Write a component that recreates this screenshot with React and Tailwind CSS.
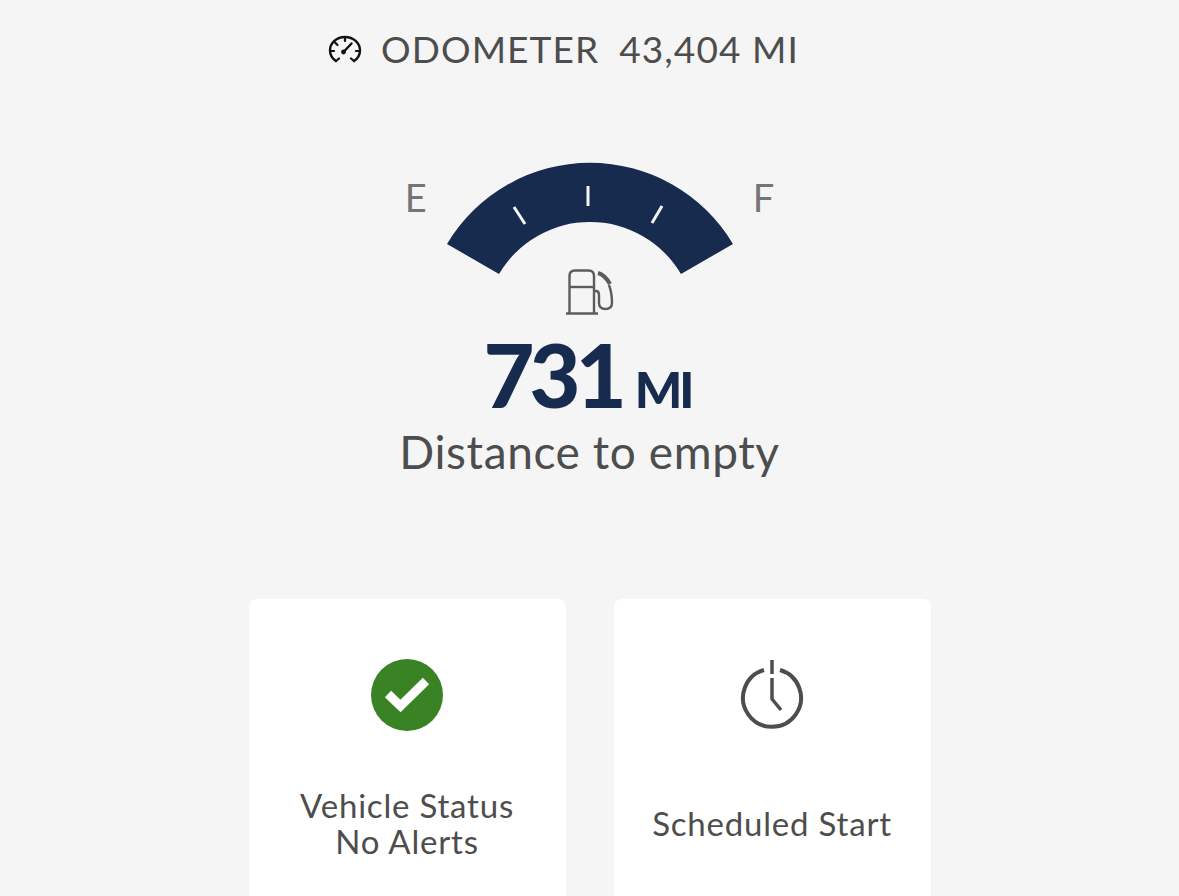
import React from "react";

const font = { fontFamily: '"Lato", "Open Sans", sans-serif' };

function OdometerIcon() {
  return (
    <svg width="34" height="30" viewBox="0 0 34 30" fill="none" stroke="#111" strokeWidth="2.4" strokeLinecap="round">
      <path d="M8 27 C3.5 24 2 20 2 16.5 C2 9 8.5 3 17 3 C25.5 3 32 9 32 16.5 C32 20 30.5 24 26 27" />
      <path d="M2.5 17 H6 M28 17 H31.5 M7 8.5 L9.5 11 M17 3.5 V7 M8 27 L11 24.5 M26 27 L23 24.5" strokeWidth="2.2" />
      <path d="M16 17.5 L23.5 9.5" strokeWidth="2.4" />
      <circle cx="15.5" cy="18" r="2.4" fill="#111" stroke="none" />
    </svg>
  );
}

function Gauge() {
  return (
    <svg width="286" height="154" viewBox="0 0 286 154" fill="none" className="overflow-visible">
      <path d="M0 81 A166.5 166.5 0 0 1 286 81 L234 111 A105.6 105.6 0 0 0 52 111 Z" fill="#172b4f" />
      <path d="M141 23 V43 M67 44 L78 61 M215 43 L205 60" stroke="#f5f5f5" strokeWidth="3" />
      {/* fuel pump */}
      <g stroke="#5c5c5c" strokeWidth="2.4" fill="none">
        <path d="M122.5 150 V113 Q122.5 107.5 128 107.5 H141.5 Q147 107.5 147 113 V150" />
        <path d="M122.5 124 H147" />
        <path d="M119 150.5 H151" strokeWidth="2.5" />
        <path d="M147 128 H149 Q152 128 152 132 V140 Q152 146 158.5 146 Q165 146 165 140 Q165 130 162 122" />
        <path d="M151 110 Q158 112 163 121" strokeWidth="4" />
      </g>
    </svg>
  );
}

function CheckBadge() {
  return (
    <svg width="72" height="72" viewBox="0 0 72 72">
      <circle cx="36" cy="36" r="36" fill="#3a8324" />
      <path d="M17 35 L29.5 47 L55 22" fill="none" stroke="#fff" strokeWidth="9" />
    </svg>
  );
}

function PowerClock() {
  return (
    <svg width="72" height="72" viewBox="0 0 72 72" fill="none" stroke="#4d4d4d">
      <path d="M28 11 A29 29 0 1 0 44 11" strokeWidth="4" />
      <path d="M36 1 V15 M36 19 V40 L45 51" strokeWidth="3.5" />
    </svg>
  );
}

function Card({ icon, children }) {
  return (
    <div className="w-[317px] h-[330px] shrink-0 rounded-lg bg-white pt-[60px] flex flex-col items-center">
      <div className="h-[72px] flex justify-center">{icon}</div>
      <div className="mt-[56px] h-[72px] flex items-center text-center text-[33px] leading-[36px] tracking-[0.8px] text-[#4d4d4d]">
        <div>{children}</div>
      </div>
    </div>
  );
}

export default function App() {
  return (
    <div className="h-[896px] overflow-hidden bg-[#f5f5f5]" style={font}>
      <div className="pt-[26px] pr-[52px] flex justify-center items-center h-[72px] text-[#4d4d4d] text-[37px] leading-[46px] tracking-[1.1px]">
        <OdometerIcon />
        <span className="ml-[19px]">ODOMETER</span>
        <span className="ml-[20px]">43,404 MI</span>
      </div>

      <div className="mt-[91px] flex justify-center">
        <span className="text-[38px] leading-[46px] mt-[11px] mr-[20px] text-[#757575]">E</span>
        <Gauge />
        <span className="text-[38px] leading-[46px] mt-[11px] ml-[20px] text-[#757575]">F</span>
      </div>

      <div className="flex justify-center items-baseline mt-[13px] pr-[4px] text-[#172b4f] font-black">
        <span className="text-[88px] leading-[88px] tracking-[-5px]">731</span>
        <span className="text-[50px] leading-[52px] ml-[13px] tracking-[-3px]">MI</span>
      </div>
      <div className="mt-[8px] text-center text-[46px] leading-[52px] tracking-[0.6px] text-[#4d4d4d]">Distance to empty</div>

      <div className="mt-[121px] flex justify-center gap-12">
        <Card icon={<CheckBadge />}>
          Vehicle Status
          <br />
          No Alerts
        </Card>
        <Card icon={<PowerClock />}>Scheduled Start</Card>
      </div>
    </div>
  );
}
